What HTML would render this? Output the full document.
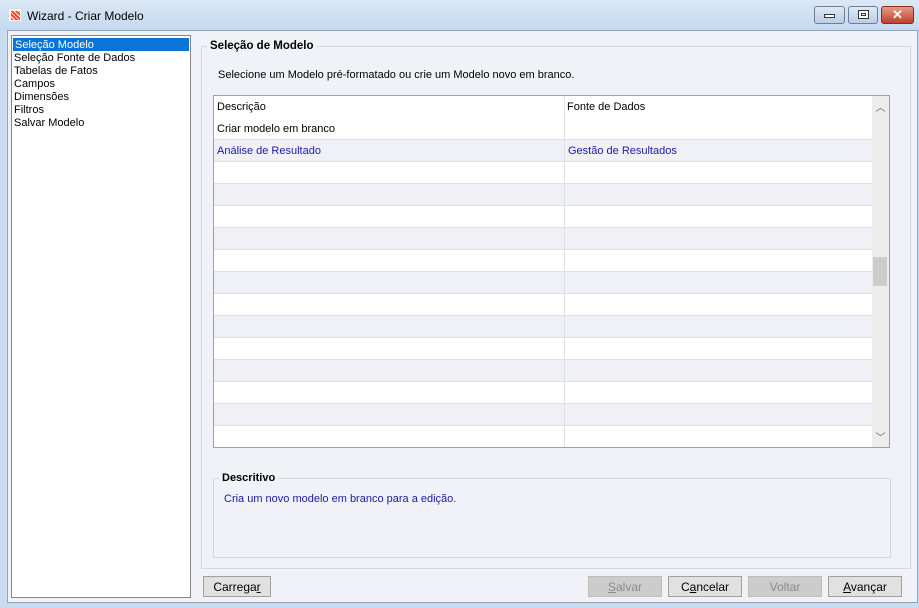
<!DOCTYPE html>
<html><head><meta charset="utf-8"><style>
*{box-sizing:border-box;margin:0;padding:0}
body{width:919px;height:608px;overflow:hidden;font-family:"Liberation Sans",sans-serif;font-size:11px;background:#c9dcf0;position:relative}
.abs{position:absolute}
#title{left:0;top:0;width:919px;height:31px;background:linear-gradient(#dbe8f6,#c4d8ee)}
#frame{left:7px;top:30px;width:911px;height:573px;background:#f1f2f7;border:1px solid #8ea4bf}
#list{left:11px;top:35px;width:180px;height:563px;background:#fff;border:1px solid #828790;padding-top:1px}
#list div{height:13px;line-height:14px;padding-left:2px;font-size:11px}
.sel{background:#0a74d8;color:#fff;margin:1px 1px 0 1px}
.gb{border:1px solid #d6d8de}
.legend{background:#f1f2f7;font-weight:bold;font-size:11.5px;padding:0 3px}
#grid{left:213px;top:95px;width:677px;height:353px;border:1px solid #a0a0a0;background:#fff;overflow:hidden}
.row{position:absolute;left:0;width:658px;height:22px;border-bottom:1px solid #e0e0e4}
.row span{position:absolute;top:5px;font-size:11px}
.g{background:#f0f1f6}
.btn{position:absolute;top:576px;height:21px;border:1px solid #a0a0a0;background:#e1e1e1;text-align:center;line-height:20px;font-size:12px}
.dis{color:#8a8a8a;background:#cccccc;border-color:#bdbdbd}
.wb{position:absolute;top:6px;height:18px;border:1px solid #6d7f97;border-radius:3px;background:linear-gradient(#dfe9f5,#b9cde5)}
</style></head><body>
<div id="title" class="abs"></div>
<div class="abs" style="left:8px;top:8px;width:14px;height:14px;background:#fff;border:1px solid #ddd"><div style="margin:2px;width:9px;height:9px;background:repeating-linear-gradient(45deg,#e8501c 0 2px,#fff 2px 3px)"></div></div>
<div class="abs" style="left:27px;top:9px;font-size:12px;color:#000">Wizard - Criar Modelo</div>
<div class="wb" style="left:814px;width:31px"><div style="margin:7px auto 0;width:11px;height:4px;background:#fff;border:1px solid #333"></div></div>
<div class="wb" style="left:848px;width:30px"><div style="margin:3px auto 0;width:11px;height:9px;border:1px solid #333;background:#fff"><div style="margin:2px auto;width:5px;height:3px;border:1px solid #333"></div></div></div>
<div class="wb" style="left:881px;width:33px;background:linear-gradient(#e49a88,#c0402a);border-color:#8a2b1c;color:#fff;text-align:center;font-weight:bold;font-size:13px;line-height:16px">✕</div>
<div id="frame" class="abs"></div>
<div id="list" class="abs">
<div class="sel">Seleção Modelo</div>
<div>Seleção Fonte de Dados</div>
<div>Tabelas de Fatos</div>
<div>Campos</div>
<div>Dimensões</div>
<div>Filtros</div>
<div>Salvar Modelo</div>
</div>
<div class="abs gb" style="left:201px;top:46px;width:710px;height:523px"></div>
<div class="abs legend" style="left:207px;top:40px">Seleção de Modelo</div>
<div class="abs" style="left:218px;top:69px">Selecione um Modelo pré-formatado ou crie um Modelo novo em branco.</div>
<div id="grid" class="abs">
<div class="row" style="top:0;height:44px"><span style="left:3px">Descrição</span><span style="left:353px">Fonte de Dados</span><span style="left:3px;top:27px">Criar modelo em branco</span></div>
<div class="row g" style="top:44px"><span style="left:3px;color:#1a1aa8">Análise de Resultado</span><span style="left:354px;color:#1a1aa8">Gestão de Resultados</span></div>
<div class="row" style="top:66px"></div><div class="row g" style="top:88px"></div>
<div class="row" style="top:110px"></div><div class="row g" style="top:132px"></div>
<div class="row" style="top:154px"></div><div class="row g" style="top:176px"></div>
<div class="row" style="top:198px"></div><div class="row g" style="top:220px"></div>
<div class="row" style="top:242px"></div><div class="row g" style="top:264px"></div>
<div class="row" style="top:286px"></div><div class="row g" style="top:308px"></div>
<div class="row" style="top:330px"></div>
<div class="abs" style="left:350px;top:0;width:1px;height:353px;background:#e0e0e4"></div>
<div class="abs" style="left:658px;top:0;width:17px;height:353px;background:#ededed;color:#606060;text-align:center;font-size:10px"><div style="margin-top:3px">︿</div><div style="position:absolute;top:161px;left:1px;width:14px;height:29px;background:#cdcdcd"></div><div style="position:absolute;top:333px;left:0;width:17px">﹀</div></div>
</div>
<div class="abs gb" style="left:213px;top:478px;width:678px;height:80px"></div>
<div class="abs legend" style="left:219px;top:472px;font-size:11px">Descritivo</div>
<div class="abs" style="left:224px;top:493px;color:#1a1aa8">Cria um novo modelo em branco para a edição.</div>
<div class="btn" style="left:203px;width:68px">Carrega<u>r</u></div>
<div class="btn dis" style="left:588px;width:74px"><u>S</u>alvar</div>
<div class="btn" style="left:668px;width:74px">C<u>a</u>ncelar</div>
<div class="btn dis" style="left:748px;width:74px">Voltar</div>
<div class="btn" style="left:828px;width:74px"><u>A</u>vançar</div>
</body></html>
